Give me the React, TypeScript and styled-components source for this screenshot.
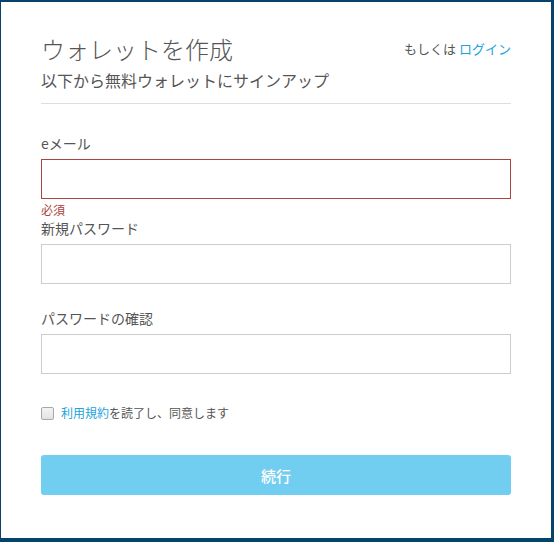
import React, { useState } from 'react';
import styled, { createGlobalStyle } from 'styled-components';

const GlobalStyle = createGlobalStyle`
  html, body {
    margin: 0;
    padding: 0;
    background: #06436b;
  }
  body {
    font-family: "Noto Sans CJK JP", "Noto Sans", sans-serif;
    color: #555555;
  }
`;

const StyledPage = styled.div`
  padding: 2px 3px 4px 1px;
  height: 542px;
  box-sizing: border-box;
`;
const StyledCard = styled.div`
  background: #ffffff;
  box-sizing: border-box;
  height: 536px;
  padding: 32px 40px 0;
`;
const StyledHeader = styled.div`
  border-bottom: 1px solid #dddddd;
  padding-bottom: 12px;
  margin-bottom: 29px;
  .top {
    display: flex;
    justify-content: space-between;
    align-items: center;
  }
  .title {
    color: #555555;
    font-size: 24px;
    font-weight: 300;
    line-height: 30px;
    margin: 0;
  }
  .login {
    color: #555555;
    font-size: 13px;
    line-height: 20px;
    a {
      color: #22a3dd;
      text-decoration: none;
    }
  }
  .subtitle {
    color: #555555;
    font-size: 16px;
    line-height: 22px;
    margin: 5px 0 0;
  }
`;
const StyledField = styled.div<{ $gap: number }>`
  margin-bottom: ${(p) => p.$gap}px;
  label {
    display: block;
    font-size: 14px;
    line-height: 20px;
    color: #555555;
    margin-bottom: 6px;
  }
`;
const StyledInput = styled.input<{ $error?: boolean }>`
  display: block;
  box-sizing: border-box;
  width: 100%;
  height: 40px;
  border: 1px solid ${(p) => (p.$error ? '#a94442' : '#cccccc')};
  border-radius: 0;
  padding: 0 10px;
  font-family: inherit;
  font-size: 14px;
  outline: none;
`;
const StyledHelp = styled.div`
  color: #a94442;
  font-size: 12px;
  line-height: 16px;
  margin-top: 3px;
`;
const StyledAgree = styled.label`
  display: flex;
  align-items: center;
  font-size: 12px;
  line-height: 20px;
  color: #555555;
  margin-top: 29px;
  input {
    appearance: none;
    width: 13px;
    height: 13px;
    margin: 0 7px 0 0;
    border: 1px solid #a8a8a8;
    border-radius: 2px;
    background: linear-gradient(#f4f4f4, #e2e2e2);
  }
  a {
    color: #22a3dd;
    text-decoration: none;
  }
`;
const StyledButton = styled.button`
  display: block;
  width: 100%;
  height: 40px;
  margin-top: 32px;
  border: none;
  border-radius: 3px;
  background: #72cef0;
  color: #ffffff;
  font-family: inherit;
  font-size: 15px;
  font-weight: 500;
  cursor: pointer;
`;

const App: React.FC = (): JSX.Element => {
  const [agree, setAgree] = useState<boolean>(false);

  return (
    <>
      <GlobalStyle />
      <StyledPage>
        <StyledCard>
          <StyledHeader>
            <div className='top'>
              <h2 className='title'>ウォレットを作成</h2>
              <span className='login'>もしくは <a href='#'>ログイン</a></span>
            </div>
            <p className='subtitle'>以下から無料ウォレットにサインアップ</p>
          </StyledHeader>
          <StyledField $gap={0}>
            <label>eメール</label>
            <StyledInput type='email' $error />
            <StyledHelp>必須</StyledHelp>
          </StyledField>
          <StyledField $gap={24}>
            <label>新規パスワード</label>
            <StyledInput type='password' />
          </StyledField>
          <StyledField $gap={0}>
            <label>パスワードの確認</label>
            <StyledInput type='password' />
          </StyledField>
          <StyledAgree>
            <input type='checkbox' checked={agree} onChange={() => setAgree(!agree)} />
            <span><a href='#'>利用規約</a>を読了し、同意します</span>
          </StyledAgree>
          <StyledButton disabled={!agree}>続行</StyledButton>
        </StyledCard>
      </StyledPage>
    </>
  );
};

export default App;
